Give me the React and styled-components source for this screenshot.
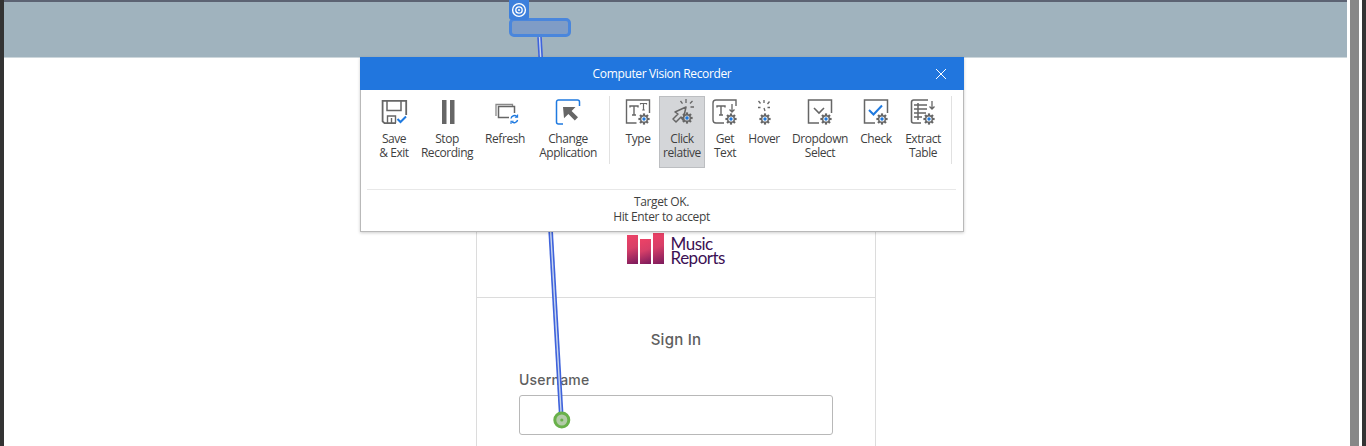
import React from "react";
import styled, { createGlobalStyle } from "styled-components";

const Global = createGlobalStyle`
  html, body { margin: 0; padding: 0; background: #fff; overflow: hidden; }
  * { box-sizing: border-box; }
`;

const Page = styled.div`
  position: relative;
  width: 1366px;
  height: 446px;
  overflow: hidden;
  display: flex;
  background: #fff;
  font-family: "Open Sans", "Noto Sans", sans-serif;
`;
const LeftEdge = styled.div`width: 4px; background: #333; flex: none;`;
const Main = styled.main`width: 1343px; flex: none; display: flex; flex-direction: column;`;
const TopStrip = styled.div`height: 2px; background: #5c6373; flex: none;`;
const Band = styled.div`height: 55px; background: #a0b3be; flex: none;`;
const BandEdge = styled.div`height: 1px; background: #cdd7dc; flex: none;`;
const Scrollbar = styled.div`width: 9px; margin-left: 3px; background: #878787; flex: none;`;
const RightEdge = styled.div`width: 4px; margin-left: 3px; background: #333; flex: none;`;

const Card = styled.section`
  width: 400px;
  margin-left: 472px;
  flex: 1;
  border-left: 1px solid #dcdcdc;
  border-right: 1px solid #dcdcdc;
`;
const LogoArea = styled.div`
  height: 240px;
  border-bottom: 1px solid #dcdcdc;
  display: flex;
  justify-content: center;
  align-items: flex-end;
  padding: 0 0 33px 0;
  gap: 7px;
`;
const Bars = styled.div`display: flex; align-items: flex-end; gap: 2.5px;`;
const Bar = styled.div`
  width: 10.5px;
  height: ${p => p.$h}px;
  background: linear-gradient(160deg, #ee4266 0%, #d73f68 45%, #7a1a5c 100%);
`;
const LogoText = styled.div`
  font-family: "Lato", sans-serif;
  font-weight: 400;
  font-size: 17px;
  line-height: 14px;
  letter-spacing: -0.5px;
  color: #3c1053;
  transform: translateY(1px);
`;
const SignIn = styled.h2`
  margin: 32px 0 0 0;
  text-align: center;
  font-family: "Inter", sans-serif;
  font-size: 15px;
  line-height: 20px;
  font-weight: 500;
  letter-spacing: 0.25px;
  color: #5e5e5e;
`;
const Form = styled.div`padding: 20px 42px 0 42px;`;
const Label = styled.label`
  display: block;
  font-family: "Inter", sans-serif;
  font-size: 14px;
  line-height: 20px;
  font-weight: 500;
  letter-spacing: 0.2px;
  color: #5e5e5e;
`;
const Input = styled.div`
  margin-top: 5px;
  width: 314px;
  height: 40px;
  border: 1px solid #b8b8b8;
  border-radius: 3px;
`;

const Overlay = styled.svg`
  position: absolute;
  left: 0;
  top: 0;
  pointer-events: none;
`;
const TargetBadge = styled.div`
  position: absolute;
  left: 509px;
  top: 0;
  width: 20px;
  height: 20px;
  background: #3d80dc;
  border-radius: 0 0 3px 3px;
  display: flex;
  align-items: center;
  justify-content: center;
`;
const TargetBox = styled.div`
  position: absolute;
  left: 509px;
  top: 18px;
  width: 62px;
  height: 19px;
  background: #7f9cc6;
  border: 3px solid #4a86dc;
  border-radius: 5px;
`;

const Dialog = styled.div`
  position: absolute;
  left: 360px;
  top: 57px;
  width: 604px;
  height: 175px;
  background: #fff;
  border: 1px solid #b9b9b9;
  border-top: none;
  box-shadow: 0 1px 3px rgba(0,0,0,.2);
  display: flex;
  flex-direction: column;
`;
const Header = styled.header`
  height: 33px;
  margin: 0 -1px;
  flex: none;
  background: #2176de;
  color: #fff;
  display: flex;
  align-items: center;
  justify-content: center;
  position: relative;
  font-size: 12px;
  letter-spacing: -0.35px;
`;
const Close = styled.svg`
  position: absolute;
  right: 17px;
  top: 11px;
`;
const Toolbar = styled.div`
  display: flex;
  align-items: flex-start;
  height: 72px;
  margin-top: 6px;
  padding-left: 10px;
  flex: none;
`;
const Tool = styled.div`
  width: ${p => p.$w}px;
  height: 72px;
  flex: none;
  display: flex;
  flex-direction: column;
  align-items: center;
  padding-top: 2px;
  background: ${p => (p.$active ? "#d4d6d9" : "transparent")};
  outline: ${p => (p.$active ? "1px solid #bcbec1" : "none")};
  outline-offset: -1px;
`;
const ToolLabel = styled.span`
  margin-top: 6px;
  font-size: 12px;
  line-height: 14px;
  letter-spacing: -0.45px;
  color: #3f3f3f;
  text-align: center;
  white-space: pre-line;
`;
const Sep = styled.div`
  width: 1px;
  height: 68px;
  flex: none;
  background: #e1e1e1;
  margin: ${p => p.$m};
`;
const Status = styled.div`
  margin: 21px 7px 0 6px;
  border-top: 1px solid #e8e8e8;
  padding-top: 4px;
  text-align: center;
  font-size: 12px;
  line-height: 15px;
  letter-spacing: -0.36px;
  color: #3f3f3f;
`;

const G = "#666";
const B = "#1f7ae0";

const Gear = ({ x, y, hole = "#fff" }) => {
  const teeth = [0, 45, 90, 135];
  return (
    <g transform={`translate(${x} ${y})`}>
      {teeth.map(a => (
        <rect key={a} x="-5.6" y="-1.1" width="11.2" height="2.2" fill={G} transform={`rotate(${a})`} />
      ))}
      <circle r="4" fill={G} />
      <circle r="2.6" fill={hole} />
      <circle r="1.7" fill={B} />
    </g>
  );
};

const Icon = ({ children }) => (
  <svg width="28" height="28" viewBox="0 0 28 28" fill="none">{children}</svg>
);

const icons = {
  save: (
    <Icon>
      <path d="M16 25.2H4.5L2.6 23.3V2.8h23.6V17" stroke={G} strokeWidth="1.8" />
      <path d="M7 3v9.5h14V3" stroke={G} strokeWidth="1.5" />
      <path d="M7.5 25v-7h8v7M11.5 20v5" stroke={G} strokeWidth="1.4" />
      <path d="M17.5 21l3 3 5.5-5.5" stroke={B} strokeWidth="2" />
    </Icon>
  ),
  pause: (
    <Icon>
      <rect x="9" y="2" width="4.5" height="24" fill={G} />
      <rect x="17" y="2" width="4.5" height="24" fill={G} />
    </Icon>
  ),
  refresh: (
    <Icon>
      <path d="M5 18V6.5h16.5V9" stroke="#8a8a8a" strokeWidth="1.3" />
      <rect x="7.5" y="8.5" width="16" height="11" stroke={G} strokeWidth="1.5" fill="#fff" />
      <rect x="18" y="15" width="10" height="11" fill="#fff" />
      <path d="M20 20.5a3.5 3.5 0 0 1 6-1.8M26.6 22a3.5 3.5 0 0 1-6 1.6" stroke={B} strokeWidth="1.4" />
      <path d="M26.6 16.5v2.7h-2.7M20 26v-2.7h2.7" stroke={B} strokeWidth="1.1" />
    </Icon>
  ),
  change: (
    <Icon>
      <path d="M9 26H4.5A2 2 0 0 1 2.5 24V4A2 2 0 0 1 4.5 2h19a2 2 0 0 1 2 2v4" stroke={B} strokeWidth="1.5" />
      <path d="M9 9h12.5l-3.9 3.9 6.4 6.4-3.2 3.2-6.4-6.4L10 20.2z" fill={G} />
    </Icon>
  ),
  type: (
    <Icon>
      <path d="M12.5 25H2.5V2h23v13" stroke={G} strokeWidth="1.4" />
      <path d="M6 9.5V8h8v1.5M10 8v9M8 17h4" stroke={G} strokeWidth="1.4" />
      <path d="M16.5 6.5V5.5h6v1M19.5 5.5V12M18.2 12h2.6" stroke={G} strokeWidth="1.2" />
      <Gear x={20} y={21} />
    </Icon>
  ),
  click: (
    <Icon>
      <path d="M18 9L7 14l3 2-5 5 3 3 5-5 2 3z" stroke={G} strokeWidth="1.5" strokeLinejoin="round" fill="#d4d6d9" />
      <path d="M18 1v4M12.5 3l2 2.6M24.5 3l-2.5 2.5M26 9h-3.5" stroke={G} strokeWidth="1.3" />
      <Gear x={19} y={20} hole="#d4d6d9" />
    </Icon>
  ),
  getText: (
    <Icon>
      <path d="M13 25H5a3 3 0 0 1-3-3V5a3 3 0 0 1 3-3h20v6" stroke={G} strokeWidth="1.4" />
      <path d="M6 9.5V8h8v1.5M10 8v9M8 17h4" stroke={G} strokeWidth="1.4" />
      <path d="M21 6v8M18.5 11.5L21 14l2.5-2.5" stroke={G} strokeWidth="1.3" />
      <Gear x={20} y={21} />
    </Icon>
  ),
  hover: (
    <Icon>
      <path d="M14 2v3M8.5 3L10.5 5.5M19.5 3.5L17.5 6M8 9.5h2.5M17.5 9.5H20M14 10l1 3" stroke={G} strokeWidth="1.3" />
      <Gear x={15} y={21} />
    </Icon>
  ),
  dropdown: (
    <Icon>
      <path d="M13 25H2.5V2h23v13" stroke={G} strokeWidth="1.5" />
      <path d="M8 10l5 5 5-5" stroke={G} strokeWidth="1.6" />
      <Gear x={20} y={21} />
    </Icon>
  ),
  check: (
    <Icon>
      <path d="M13 25H2.5V2h23v13" stroke={G} strokeWidth="1.5" />
      <path d="M7 12l4.5 4.5L20 7.5" stroke={B} strokeWidth="2" />
      <Gear x={20} y={21} />
    </Icon>
  ),
  extract: (
    <Icon>
      <path d="M12 25H4.5a2 2 0 0 1-2-2V4a2 2 0 0 1 2-2H19" stroke={G} strokeWidth="1.6" />
      <path d="M5 7h13M5 11h13M5 15h12M5 19h8M9 5v17" stroke={G} strokeWidth="1.5" />
      <path d="M23 3v8M20.5 8.5L23 11l2.5-2.5" stroke={G} strokeWidth="1.3" />
      <Gear x={20} y={21} />
    </Icon>
  ),
};

const group1 = [
  { k: "save", t: "Save\n& Exit", w: 46 },
  { k: "pause", t: "Stop\nRecording", w: 60 },
  { k: "refresh", t: "Refresh", w: 56 },
  { k: "change", t: "Change\nApplication", w: 70 },
];
const group2 = [
  { k: "type", t: "Type", w: 42 },
  { k: "click", t: "Click\nrelative", w: 46, active: true },
  { k: "getText", t: "Get\nText", w: 40 },
  { k: "hover", t: "Hover", w: 38 },
  { k: "dropdown", t: "Dropdown\nSelect", w: 74 },
  { k: "check", t: "Check", w: 38 },
  { k: "extract", t: "Extract\nTable", w: 56 },
];

const ToolItem = ({ k, t, w, active }) => (
  <Tool $w={w} $active={active}>
    {icons[k]}
    <ToolLabel>{t}</ToolLabel>
  </Tool>
);

export default function App() {
  return (
    <Page>
      <Global />
      <LeftEdge />
      <Main>
        <TopStrip />
        <Band />
        <BandEdge />
        <Card>
          <LogoArea>
            <Bars>
              <Bar $h={29} />
              <Bar $h={25} />
              <Bar $h={31} />
            </Bars>
            <LogoText>Music<br />Reports</LogoText>
          </LogoArea>
          <SignIn>Sign In</SignIn>
          <Form>
            <Label>Username</Label>
            <Input />
          </Form>
        </Card>
      </Main>
      <Scrollbar />
      <RightEdge />

      <Overlay width="1366" height="446" viewBox="0 0 1366 446" fill="none">
        <path d="M539.5 37L561.5 420" stroke="#3f63dc" strokeWidth="4.6" />
        <path d="M539.5 37L561.5 420" stroke="#c9d6ee" strokeWidth="1.4" />
        <circle cx="561.8" cy="420" r="7" fill="#b3cba8" stroke="#69b14a" strokeWidth="3" />
        <circle cx="561.8" cy="420" r="1.6" fill="#69b14a" />
      </Overlay>
      <TargetBox />
      <TargetBadge>
        <svg width="16" height="16" viewBox="0 0 16 16" fill="none" stroke="#fff">
          <circle cx="8" cy="8" r="6.4" strokeWidth="1.4" />
          <circle cx="8" cy="8" r="3.2" strokeWidth="1.3" />
          <circle cx="8" cy="8" r="1" fill="#fff" strokeWidth="0" />
        </svg>
      </TargetBadge>

      <Dialog>
        <Header>
          Computer Vision Recorder
          <Close width="12" height="12" viewBox="0 0 12 12" fill="none" stroke="#fff" strokeWidth="1">
            <path d="M1 1l10 10M11 1L1 11" />
          </Close>
        </Header>
        <Toolbar>
          {group1.map(i => <ToolItem key={i.k} {...i} />)}
          <Sep $m="0 7px 0 6px" />
          {group2.map(i => <ToolItem key={i.k} {...i} />)}
          <Sep />
        </Toolbar>
        <Status>
          Target OK.<br />Hit Enter to accept
        </Status>
      </Dialog>
    </Page>
  );
}
